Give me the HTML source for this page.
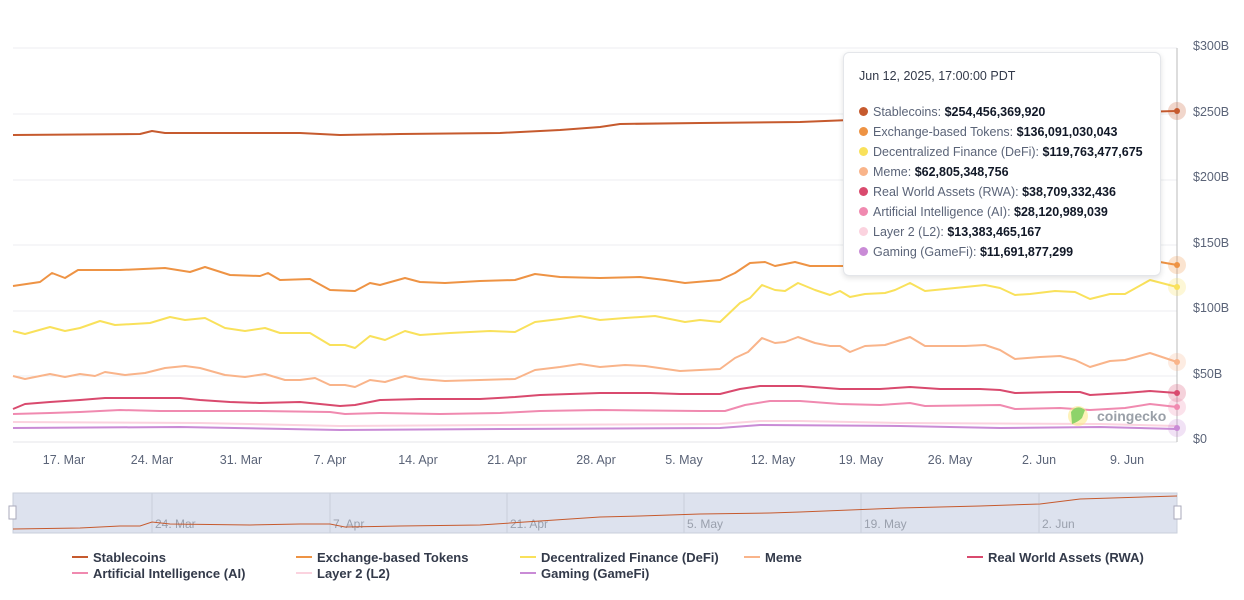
<!DOCTYPE html>
<html><head><meta charset="utf-8"><style>
body{margin:0;width:1244px;height:600px;background:#fff;font-family:"Liberation Sans",sans-serif;overflow:hidden;position:relative}
.tt{position:absolute;left:843px;top:52px;width:316px;height:222px;background:#fff;border:1px solid #e4e6ea;border-radius:6px;box-shadow:0 2px 6px rgba(0,0,0,.12);font-size:12.5px;color:#5b6478}
.tt .h{position:absolute;left:15px;top:16px;color:#333a4a;font-size:12.5px}
.tt .r{position:absolute;left:15px;white-space:nowrap}
.tt .r i{display:inline-block;width:9px;height:9px;border-radius:50%;margin-right:5px;vertical-align:-0px}
.tt b{color:#111827}
.lg{position:absolute;font-size:13px;font-weight:bold;color:#333a4a;white-space:nowrap}
.lg i{display:inline-block;width:16px;height:2px;margin-right:5px;vertical-align:4px}
</style></head><body>
<svg width="1244" height="600" style="position:absolute;left:0;top:0" font-family="Liberation Sans, sans-serif">
<g stroke="#eceef1" stroke-width="1">
<line x1="13" y1="48" x2="1177" y2="48"/><line x1="13" y1="114" x2="1177" y2="114"/><line x1="13" y1="180" x2="1177" y2="180"/><line x1="13" y1="245" x2="1177" y2="245"/><line x1="13" y1="311" x2="1177" y2="311"/><line x1="13" y1="376" x2="1177" y2="376"/>
</g>
<line x1="13" y1="442" x2="1177" y2="442" stroke="#e4e6ea"/>
<line x1="1177" y1="48" x2="1177" y2="442" stroke="#bbb"/>
<g fill="#5b6478" font-size="12.5">
<text x="1193" y="50">$300B</text><text x="1193" y="116">$250B</text><text x="1193" y="181">$200B</text><text x="1193" y="247">$150B</text><text x="1193" y="312">$100B</text><text x="1193" y="378">$50B</text><text x="1193" y="443">$0</text>
</g>
<g fill="#5b6478" font-size="12.5" text-anchor="middle">
<text x="64" y="464">17. Mar</text><text x="152" y="464">24. Mar</text><text x="241" y="464">31. Mar</text><text x="330" y="464">7. Apr</text><text x="418" y="464">14. Apr</text><text x="507" y="464">21. Apr</text><text x="596" y="464">28. Apr</text><text x="684" y="464">5. May</text><text x="773" y="464">12. May</text><text x="861" y="464">19. May</text><text x="950" y="464">26. May</text><text x="1039" y="464">2. Jun</text><text x="1127" y="464">9. Jun</text>
</g>
<g fill="none" stroke-width="2" stroke-linejoin="round">
<polyline stroke="#c65a2e" points="13,135 140,134 152,131 165,133 300,133 320,134 340,135 400,134 500,133 560,130 600,127 620,124 700,123 800,122 850,120 900,118 1000,116 1100,113 1177,111"/>
<polyline stroke="#ee9344" points="13,286 40,282 52,273 65,278 78,270 120,270 165,268 190,272 205,267 230,275 260,276 268,273 280,280 310,279 330,290 355,291 370,283 380,285 405,278 420,282 445,283 480,281 515,280 535,274 560,277 600,278 640,277 665,280 685,283 720,280 735,273 750,263 765,262 775,266 795,262 810,266 840,266 900,266 1000,265 1160,262 1177,265"/>
<polyline stroke="#f9e15b" points="13,331 25,334 50,327 65,331 80,328 100,321 115,325 150,323 170,317 185,320 205,318 225,328 245,331 265,328 280,333 310,333 330,345 345,345 355,348 370,336 385,340 405,331 420,335 450,333 490,331 515,332 535,322 560,319 580,316 600,320 625,318 655,316 685,322 700,320 720,322 740,303 750,298 762,285 775,290 785,291 798,283 815,290 830,295 840,291 850,297 865,294 885,293 895,290 910,283 925,291 945,289 965,287 985,285 1000,288 1015,295 1030,294 1055,291 1075,292 1090,299 1110,294 1125,294 1150,280 1177,287"/>
<polyline stroke="#f9b48a" points="13,376 25,379 50,374 65,377 80,374 95,376 105,372 125,375 145,373 165,368 185,366 200,368 225,375 245,377 265,374 285,380 300,380 315,378 330,385 345,385 355,387 370,380 385,382 405,376 420,379 445,381 480,380 515,379 535,370 560,367 580,364 600,367 625,365 645,366 680,371 720,369 735,358 748,352 762,338 775,343 785,342 798,337 815,343 830,346 840,346 850,352 865,346 885,345 910,337 925,346 965,346 985,345 1000,350 1015,359 1040,357 1060,356 1075,360 1090,367 1110,361 1125,360 1150,353 1177,362"/>
<polyline stroke="#d94a6e" points="13,409 25,404 50,402 80,400 105,398 180,398 200,400 230,402 260,403 300,402 320,404 340,406 355,405 380,400 420,399 480,399 515,397 540,395 600,393 650,393 680,394 720,394 740,389 760,386 800,386 840,389 880,389 910,387 940,389 980,389 1000,390 1015,393 1060,392 1080,392 1090,395 1125,393 1150,391 1177,393"/>
<polyline stroke="#f08ab0" points="13,414 50,413 80,412 120,410 160,411 260,411 330,412 345,414 380,413 440,414 500,413 540,411 600,410 700,411 725,411 745,405 770,401 800,401 840,404 880,405 910,403 925,406 1000,405 1015,409 1060,408 1090,410 1125,408 1150,404 1177,407"/>
<polyline stroke="#fbd3df" points="13,422 200,423 340,426 500,425 720,424 760,421 800,421 900,423 1100,424 1177,426"/>
<polyline stroke="#c98bd6" points="13,428 180,427 340,430 500,429 720,428 760,425 900,426 1000,428 1100,427 1177,429"/>
</g>
<g>
<circle cx="1177" cy="111" r="9" fill="#c65a2e" opacity=".25"/><circle cx="1177" cy="111" r="3" fill="#c65a2e"/>
<circle cx="1177" cy="265" r="9" fill="#ee9344" opacity=".25"/><circle cx="1177" cy="265" r="3" fill="#ee9344"/>
<circle cx="1177" cy="287" r="9" fill="#f9e15b" opacity=".25"/><circle cx="1177" cy="287" r="3" fill="#f9e15b"/>
<circle cx="1177" cy="362" r="9" fill="#f9b48a" opacity=".25"/><circle cx="1177" cy="362" r="3" fill="#f9b48a"/>
<circle cx="1177" cy="393" r="9" fill="#d94a6e" opacity=".25"/><circle cx="1177" cy="393" r="3" fill="#d94a6e"/>
<circle cx="1177" cy="407" r="9" fill="#f08ab0" opacity=".25"/><circle cx="1177" cy="407" r="3" fill="#f08ab0"/>
<circle cx="1177" cy="428" r="9" fill="#c98bd6" opacity=".25"/><circle cx="1177" cy="428" r="3" fill="#c98bd6"/>
</g>
<circle cx="1078" cy="416" r="10" fill="#fbe98a" opacity=".6"/>
<path d="M1071 412 q6 -8 14 -2 l-3 8 q-4 4 -10 6 z" fill="#8ed36a"/>
<text x="1097" y="421" font-size="14" font-weight="bold" fill="#9aa0a8">coingecko</text>
<rect x="13" y="493" width="1164" height="40" fill="#dde2ee" stroke="#c9cfdb"/>
<g stroke="#c9cfdb"><line x1="152" y1="493" x2="152" y2="533"/><line x1="330" y1="493" x2="330" y2="533"/><line x1="507" y1="493" x2="507" y2="533"/><line x1="684" y1="493" x2="684" y2="533"/><line x1="861" y1="493" x2="861" y2="533"/><line x1="1039" y1="493" x2="1039" y2="533"/></g>
<g fill="#9aa0ad" font-size="12"><text x="155" y="528">24. Mar</text><text x="333" y="528">7. Apr</text><text x="510" y="528">21. Apr</text><text x="687" y="528">5. May</text><text x="864" y="528">19. May</text><text x="1042" y="528">2. Jun</text></g>
<polyline fill="none" stroke="#c65a2e" stroke-width="1" points="13,529 80,528 120,526 140,526 152,522 170,524 250,525 300,524 330,524 345,527 400,526 480,525 540,521 600,517 640,516 700,514 770,513 800,512 900,508 980,506 1040,504 1080,499 1177,496"/>
<rect x="9" y="506" width="7" height="13" fill="#fff" stroke="#aab"/>
<rect x="1174" y="506" width="7" height="13" fill="#fff" stroke="#aab"/>
</svg>
<div class="tt">
<div class="h">Jun 12, 2025, 17:00:00 PDT</div>
<div class="r" style="top:52px"><i style="background:#c65a2e"></i>Stablecoins: <b>$254,456,369,920</b></div>
<div class="r" style="top:72px"><i style="background:#ee9344"></i>Exchange-based Tokens: <b>$136,091,030,043</b></div>
<div class="r" style="top:92px"><i style="background:#f9e15b"></i>Decentralized Finance (DeFi): <b>$119,763,477,675</b></div>
<div class="r" style="top:112px"><i style="background:#f9b48a"></i>Meme: <b>$62,805,348,756</b></div>
<div class="r" style="top:132px"><i style="background:#d94a6e"></i>Real World Assets (RWA): <b>$38,709,332,436</b></div>
<div class="r" style="top:152px"><i style="background:#f08ab0"></i>Artificial Intelligence (AI): <b>$28,120,989,039</b></div>
<div class="r" style="top:172px"><i style="background:#fbd3df"></i>Layer 2 (L2): <b>$13,383,465,167</b></div>
<div class="r" style="top:192px"><i style="background:#c98bd6"></i>Gaming (GameFi): <b>$11,691,877,299</b></div>
</div>
<div class="lg" style="left:72px;top:550px"><i style="background:#c65a2e"></i>Stablecoins</div>
<div class="lg" style="left:296px;top:550px"><i style="background:#ee9344"></i>Exchange-based Tokens</div>
<div class="lg" style="left:520px;top:550px"><i style="background:#f9e15b"></i>Decentralized Finance (DeFi)</div>
<div class="lg" style="left:744px;top:550px"><i style="background:#f9b48a"></i>Meme</div>
<div class="lg" style="left:967px;top:550px"><i style="background:#d94a6e"></i>Real World Assets (RWA)</div>
<div class="lg" style="left:72px;top:566px"><i style="background:#f08ab0"></i>Artificial Intelligence (AI)</div>
<div class="lg" style="left:296px;top:566px"><i style="background:#fbd3df"></i>Layer 2 (L2)</div>
<div class="lg" style="left:520px;top:566px"><i style="background:#c98bd6"></i>Gaming (GameFi)</div>
</body></html>
